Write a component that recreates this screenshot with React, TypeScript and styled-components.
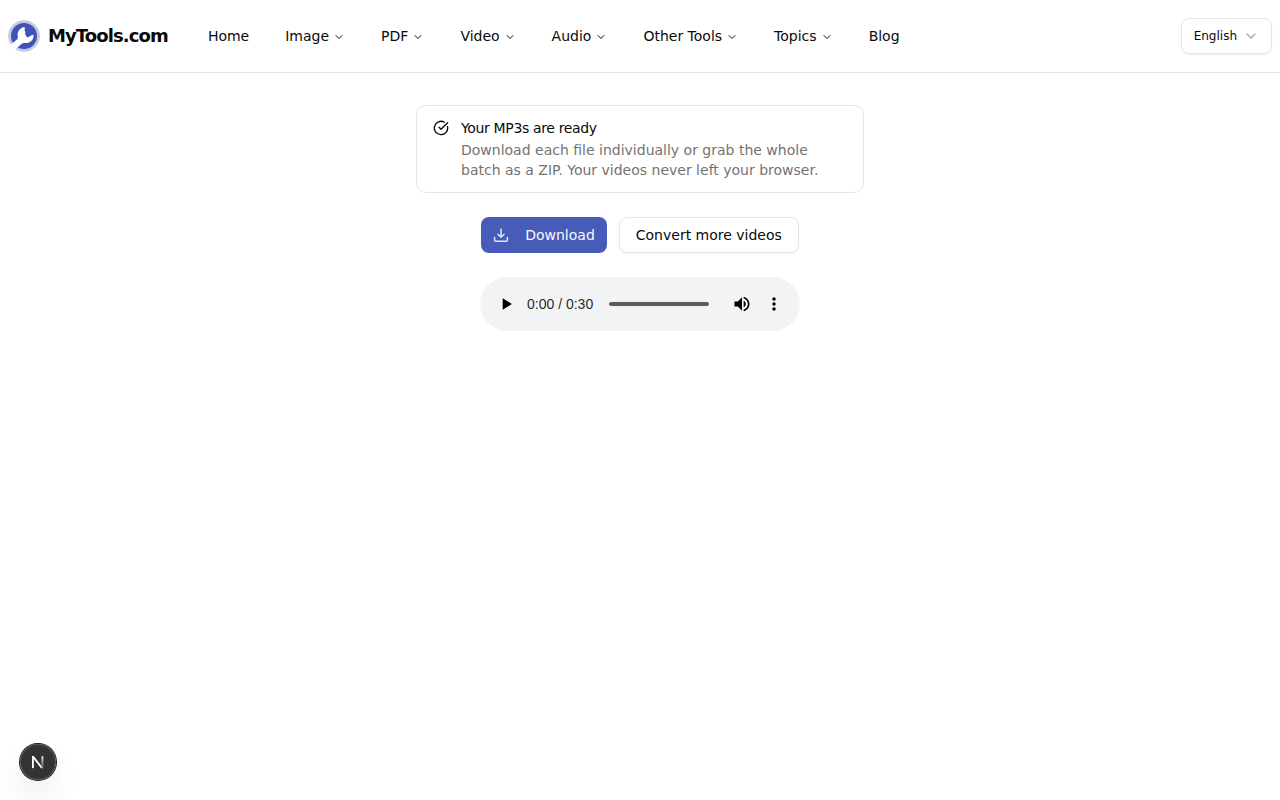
import React from "react";
import styled, { createGlobalStyle } from "styled-components";
import { ChevronDown, CircleCheckBig } from "lucide-react";

const GlobalStyle = createGlobalStyle`
  *, *::before, *::after { box-sizing: border-box; }
  body {
    margin: 0;
    background: #fff;
    color: #0a0a0a;
    font-family: "DejaVu Sans", sans-serif;
    font-size: 14px;
    line-height: 20px;
  }
  button { font: inherit; color: inherit; margin: 0; }
`;

const Header = styled.header`
  display: flex;
  align-items: center;
  height: 73px;
  padding: 0 8px;
  border-bottom: 1px solid #e5e5e5;
`;

const Brand = styled.a`
  display: flex;
  align-items: center;
  gap: 8px;
  margin-right: 24px;
  font-size: 18px;
  line-height: 28px;
  font-weight: 700;
  letter-spacing: -0.9px;
`;

const Nav = styled.nav`
  display: flex;
  gap: 4px;
`;

const NavItem = styled.a`
  display: flex;
  align-items: center;
  gap: 4px;
  height: 36px;
  padding: 0 16px;
  white-space: nowrap;

  svg {
    margin-top: 2px;
  }
`;

const LanguageSelect = styled.button`
  display: flex;
  align-items: center;
  gap: 6px;
  height: 36px;
  margin-left: auto;
  padding: 0 12px;
  border: 1px solid #e5e5e5;
  border-radius: 8px;
  background: #fff;
  box-shadow: 0 1px 2px rgba(0, 0, 0, 0.05);
  font-size: 12px;
  line-height: 16px;

  svg {
    color: #0a0a0a;
    opacity: 0.35;
  }
`;

const Main = styled.main`
  display: flex;
  flex-direction: column;
  align-items: center;
  gap: 24px;
  padding-top: 32px;
`;

const Alert = styled.div`
  display: grid;
  grid-template-columns: 16px 1fr;
  column-gap: 12px;
  row-gap: 2px;
  width: 448px;
  height: 88px;
  padding: 12px 16px;
  border: 1px solid #e5e5e5;
  border-radius: 10px;

  svg {
    margin-top: 2px;
  }
`;

const AlertTitle = styled.div`
  letter-spacing: -0.35px;
`;

const AlertText = styled.p`
  grid-column: 2;
  margin: 0;
  color: #737373;
`;

const Actions = styled.div`
  display: flex;
  gap: 12px;
`;

const Button = styled.button<{ $primary?: boolean }>`
  display: flex;
  align-items: center;
  gap: 16px;
  height: 36px;
  padding: ${(p) => (p.$primary ? "0 12px" : "0 16px")};
  border: ${(p) => (p.$primary ? "0" : "1px solid #e5e5e5")};
  border-radius: 8px;
  background: ${(p) => (p.$primary ? "#475bb8" : "#fff")};
  color: ${(p) => (p.$primary ? "#fafafa" : "#0a0a0a")};
  box-shadow: ${(p) => (p.$primary ? "none" : "0 1px 2px rgba(0, 0, 0, 0.05)")};
  white-space: nowrap;
`;

const Player = styled.div`
  display: flex;
  align-items: center;
  width: 320px;
  height: 54px;
  padding: 0 10px;
  border-radius: 27px;
  background: #f1f3f4;
`;

const PlayerButton = styled.button`
  display: flex;
  align-items: center;
  justify-content: center;
  width: 32px;
  height: 32px;
  padding: 0;
  border: 0;
  background: none;
`;

const Time = styled.span`
  margin-left: 5px;
  font-family: "Liberation Sans", sans-serif;
  font-size: 14px;
  color: rgba(0, 0, 0, 0.87);
  white-space: pre;
`;

const Track = styled.div`
  flex: 1;
  height: 4px;
  margin: 0 17px 0 16px;
  border-radius: 2px;
  background: #5b5c5c;
`;

const DevBadge = styled.button`
  position: fixed;
  left: 20px;
  bottom: 20px;
  width: 36px;
  height: 36px;
  padding: 0;
  border: 0;
  border-radius: 50%;
  background: rgba(0, 0, 0, 0.8);
  box-shadow: 0 0 0 1px #171717, inset 0 0 0 1px rgba(255, 255, 255, 0.14),
    0 16px 32px -8px rgba(0, 0, 0, 0.24);

  svg {
    display: block;
  }
`;

const Logo = () => (
  <svg width="32" height="32" viewBox="0 0 32 32">
    <defs>
      <clipPath id="logo-disc">
        <circle cx="16" cy="16" r="16" />
      </clipPath>
    </defs>
    <g clipPath="url(#logo-disc)">
      <circle cx="16" cy="16" r="16" fill="#c5cae2" />
      <circle cx="16" cy="16" r="13" fill="#4052b5" />
      <path
        fill="#fff"
        d="M2 25.3 L9.2 19.2 Q10.1 18.3 9.8 16.5 C9 12.2 11.2 8.4 16 7.1 L17.2 8.4 L16.3 10.2 L17.5 11.9 L17 13.8 L18.6 17 L20.4 17.3 L24.3 14.8 L25.7 15.3 C25.8 19.9 22.1 23.3 17.6 23.1 Q14.8 22.8 13.2 24.2 L5.5 31 L0 31 Z"
      />
    </g>
  </svg>
);

const DownloadIcon = () => (
  <svg width="16" height="16" viewBox="0 0 16 16" fill="none" stroke="#fff" strokeOpacity="0.85" strokeWidth="1.5" strokeLinecap="round" strokeLinejoin="round">
    <path d="M8 2v8.2M4.9 7.3 8 10.3l3.1-3M1.6 10.6v2.3q0 1.3 1.3 1.3h10.2q1.3 0 1.3-1.3v-2.3" />
  </svg>
);

const SelectChevron = () => (
  <svg width="16" height="16" viewBox="0 0 24 24" fill="none" stroke="currentColor" strokeWidth="2" strokeLinecap="round" strokeLinejoin="round">
    <path d="m6 9 6 6 6-6" />
  </svg>
);

const BadgeMark = () => (
  <svg width="36" height="36" viewBox="0 0 36 36" fill="none">
    <defs>
      <clipPath id="mark-bounds">
        <rect x="0" y="0.6" width="14" height="12.4" />
      </clipPath>
      <linearGradient id="diagonal" x1="9.96" y1="11.12" x2="13.2" y2="15.2" gradientUnits="userSpaceOnUse">
        <stop stopColor="#fff" />
        <stop offset="0.604" stopColor="#fff" stopOpacity="0.3" />
        <stop offset="1" stopColor="#fff" stopOpacity="0" />
      </linearGradient>
      <linearGradient id="upright" x1="11.82" y1="1.4" x2="11.79" y2="13" gradientUnits="userSpaceOnUse">
        <stop stopColor="#fff" stopOpacity="0.9" />
        <stop offset="1" stopColor="#fff" stopOpacity="0.1" />
      </linearGradient>
    </defs>
    <g transform="translate(10.6 11.4)" clipPath="url(#mark-bounds)">
      <path d="M13.3 15.2 2.34 1V12.9" stroke="url(#diagonal)" strokeWidth="1.86" />
      <path d="M11.825 0.8V13" stroke="url(#upright)" strokeWidth="1.86" />
    </g>
  </svg>
);

const links = [
  { label: "Home" },
  { label: "Image", menu: true },
  { label: "PDF", menu: true },
  { label: "Video", menu: true },
  { label: "Audio", menu: true },
  { label: "Other Tools", menu: true },
  { label: "Topics", menu: true },
  { label: "Blog" },
];

export default function App() {
  return (
    <>
      <GlobalStyle />
      <Header>
        <Brand>
          <Logo />
          MyTools.com
        </Brand>
        <Nav>
          {links.map((link) => (
            <NavItem key={link.label}>
              {link.label}
              {link.menu && <ChevronDown size={12} />}
            </NavItem>
          ))}
        </Nav>
        <LanguageSelect>
          English
          <SelectChevron />
        </LanguageSelect>
      </Header>
      <Main>
        <Alert>
          <CircleCheckBig size={16} />
          <AlertTitle>Your MP3s are ready</AlertTitle>
          <AlertText>
            Download each file individually or grab the whole batch as a ZIP. Your videos never left your browser.
          </AlertText>
        </Alert>
        <Actions>
          <Button $primary>
            <DownloadIcon />
            Download
          </Button>
          <Button>Convert more videos</Button>
        </Actions>
        <Player>
          <PlayerButton aria-label="play">
            <svg width="20" height="20" viewBox="0 0 24 24">
              <path d="M8 5v14l11-7z" />
            </svg>
          </PlayerButton>
          <Time>0:00 / 0:30</Time>
          <Track />
          <PlayerButton aria-label="mute">
            <svg width="20" height="20" viewBox="0 0 24 24">
              <path d="M3 9v6h4l5 5V4L7 9H3zm13.5 3c0-1.77-1.02-3.29-2.5-4.03v8.05c1.48-.73 2.5-2.25 2.5-4.02zM14 3.23v2.06c2.89.86 5 3.54 5 6.71s-2.11 5.85-5 6.71v2.06c4.01-.91 7-4.49 7-8.77s-2.99-7.86-7-8.77z" />
            </svg>
          </PlayerButton>
          <PlayerButton aria-label="show more media controls">
            <svg width="20" height="20" viewBox="0 0 24 24">
              <path d="M12 8c1.1 0 2-.9 2-2s-.9-2-2-2-2 .9-2 2 .9 2 2 2zm0 2c-1.1 0-2 .9-2 2s.9 2 2 2 2-.9 2-2-.9-2-2-2zm0 6c-1.1 0-2 .9-2 2s.9 2 2 2 2-.9 2-2-.9-2-2-2z" />
            </svg>
          </PlayerButton>
        </Player>
      </Main>
      <DevBadge aria-label="Open dev tools">
        <BadgeMark />
      </DevBadge>
    </>
  );
}
